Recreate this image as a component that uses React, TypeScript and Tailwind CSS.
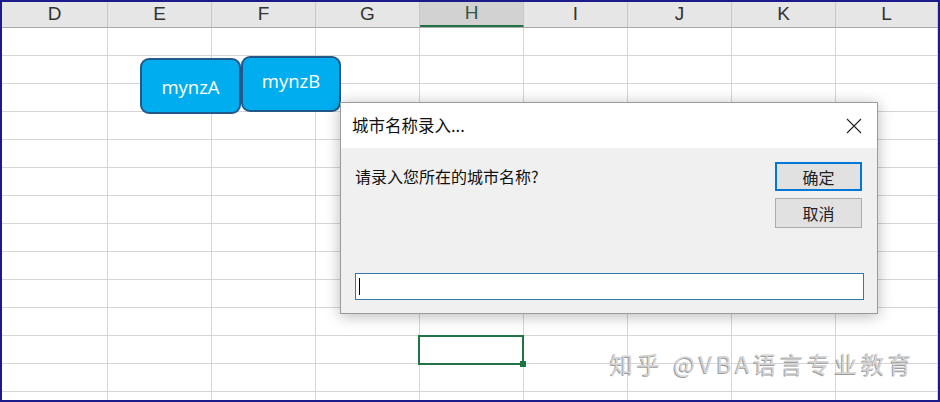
import React from "react";

const columns = [
	{ label: "D", width: "w-[106px]" },
	{ label: "E", width: "w-[104px]" },
	{ label: "F", width: "w-[104px]" },
	{ label: "G", width: "w-[104px]" },
	{ label: "H", width: "w-[104px]", active: true },
	{ label: "I", width: "w-[104px]" },
	{ label: "J", width: "w-[104px]" },
	{ label: "K", width: "w-[104px]" },
	{ label: "L", width: "flex-1" },
];

const rows = Array.from({ length: 14 }, (_, i) => i);

const cjk = { fontFamily: '"Noto Sans CJK SC", "Noto Sans", sans-serif' };

function ShapeButton({ label, className }: { label: string; className: string }) {
	return (
		<div
			className={`absolute flex items-center justify-center rounded-[9px] border-2 border-[#23598a] bg-[#00aeef] text-[18.5px] text-white ${className}`}
			style={{ fontFamily: '"Open Sans", "Liberation Sans", sans-serif' }}
		>
			{label}
		</div>
	);
}

function InputBoxDialog() {
	return (
		<div
			className="absolute left-[338px] top-[100px] flex h-[212px] w-[538px] flex-col border border-[#9a9a9a] bg-[#f0f0f0] shadow-[0_2px_14px_rgba(0,0,0,0.28)]"
			style={cjk}
		>
			<div className="flex h-[45px] items-center justify-between bg-white pl-[11px] pr-[15px]">
				<span className="text-[16.5px] text-[#111]">城市名称录入...</span>
				<svg width="16" height="16" viewBox="0 0 16 16" className="text-[#222]">
					<path d="M1 1 L15 15 M15 1 L1 15" stroke="currentColor" strokeWidth="1.1" fill="none" />
				</svg>
			</div>
			<div className="flex flex-1 flex-col px-[14px] pt-[14px]">
				<div className="flex justify-between">
					<p className="pt-[2px] text-[16px] text-[#111]">请录入您所在的城市名称?</p>
					<div className="mr-[1px] flex flex-col gap-[7px]">
						<button
							type="button"
							className="h-[29px] w-[87px] border-2 border-[#0078d7] bg-[#e1e1e1] text-[16px] text-[#222]"
						>
							确定
						</button>
						<button
							type="button"
							className="h-[30px] w-[87px] border border-[#adadad] bg-[#e1e1e1] text-[16px] text-[#222]"
						>
							取消
						</button>
					</div>
				</div>
				<div className="mt-auto mb-[13px] flex h-[27px] w-[509px] items-center border border-[#2f7aa8] bg-white pl-[3px]">
					<span className="h-[17px] w-[1px] bg-black" />
				</div>
			</div>
		</div>
	);
}

export default function App() {
	return (
		<div className="relative h-[402px] w-[940px] overflow-hidden border-2 border-[#1b1b8c] bg-white">
			<div className="flex h-[26px] border-b border-[#ababab] bg-[#e6e6e6]">
				{columns.map((col) => (
					<div
						key={col.label}
						className={`flex items-center justify-center border-r border-[#c8c8c8] text-[19px] ${col.width} ${
							col.active
								? "border-b-2 border-b-[#217346] bg-[#d2d2d2] text-[#2c5a42]"
								: "text-[#333]"
						}`}
						style={{ fontFamily: '"Liberation Sans", Arial, sans-serif' }}
					>
						{col.label}
					</div>
				))}
			</div>

			{rows.map((r) => (
				<div key={r} className="flex h-[28px] border-b border-[#d6d6d6]">
					{columns.map((col) => (
						<div key={col.label} className={`border-r border-[#d6d6d6] ${col.width}`} />
					))}
				</div>
			))}

			<ShapeButton label="mynzA" className="left-[138px] top-[56px] h-[56px] w-[101px] pt-[1px]" />
			<ShapeButton label="mynzB" className="left-[239px] top-[54px] h-[56px] w-[100px] pb-[6px]" />

			<div className="absolute left-[416px] top-[333px] h-[30px] w-[106px] border-2 border-[#217346]">
				<div className="absolute -bottom-[4px] -right-[4px] h-[6px] w-[6px] bg-[#217346]" />
			</div>

			<InputBoxDialog />

			<div
				className="absolute left-[608px] top-[344px] text-[23px] tracking-[4px] text-[#d4d4d4]"
				style={{ ...cjk, textShadow: "-1px 1px 0 #9c9c9c" }}
			>
				知乎 @VBA语言专业教育
			</div>
		</div>
	);
}
